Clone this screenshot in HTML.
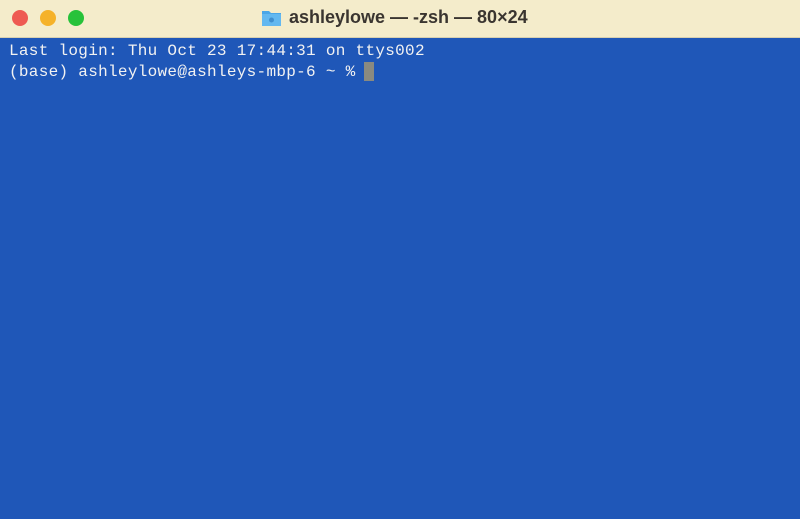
<!DOCTYPE html>
<html><head><meta charset="utf-8"><style>
html,body{margin:0;padding:0;width:800px;height:519px;overflow:hidden;background:#1f57b8;}
.bar{position:absolute;left:0;top:0;width:800px;height:37px;background:#f4eccb;border-bottom:1px solid #d8d0b0;}
.dot{position:absolute;top:10px;width:16px;height:16px;border-radius:50%;}
.title{position:absolute;left:289px;top:7px;font:bold 18px "Liberation Sans",sans-serif;color:#3a3530;white-space:nowrap;}
.term{position:absolute;left:0;top:38px;width:800px;height:481px;background:#1f57b8;}
.txt{position:absolute;left:9px;top:3px;font:16px/21px "Liberation Mono",monospace;letter-spacing:0.3px;color:#f2f2f2;white-space:pre;}
.cur{position:absolute;left:364px;top:24px;width:10px;height:19px;background:#8a8a80;}
</style></head><body>
<div class="bar">
<div class="dot" style="left:12px;background:#ee5a52"></div>
<div class="dot" style="left:40px;background:#f5b229"></div>
<div class="dot" style="left:68px;background:#27c23a"></div>
<svg style="position:absolute;left:261px;top:8px" width="21" height="19" viewBox="0 0 21 19"><path d="M1 3h7l2 2h10v13H1z" fill="#4aa6e8"/><rect x="1" y="6" width="19" height="12" fill="#63b8f0"/><circle cx="10.5" cy="12" r="2.5" fill="#3f8fd0"/></svg>
<div class="title">ashleylowe — -zsh — 80×24</div>
</div>
<div class="term">
<div class="txt">Last login: Thu Oct 23 17:44:31 on ttys002
(base) ashleylowe@ashleys-mbp-6 ~ % </div>
<div class="cur"></div>
</div>
</body></html>
